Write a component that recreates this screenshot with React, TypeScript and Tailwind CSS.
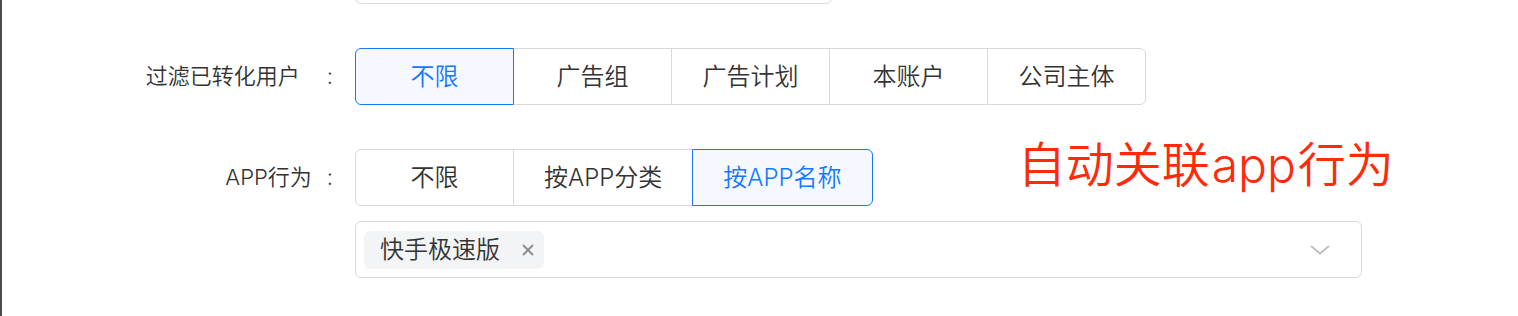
import { X } from 'lucide-react'

const font = { fontFamily: 'Inter, "Noto Sans CJK SC", sans-serif' }

type Opt = { label: string; active?: boolean }

const RadioGroup = ({ options }: { options: Opt[] }) => {
  return (
    <div className="flex">
      {options.map((o, i) => (
        <div
          key={o.label}
          className={[
            'relative flex h-[57px] min-w-[159px] items-center justify-center border px-[30px] text-[24px]',
            i > 0 ? '-ml-px' : '',
            i === 0 ? 'rounded-l-[6px]' : '',
            i === options.length - 1 ? 'rounded-r-[6px]' : '',
            o.active
              ? 'z-10 border-[#1677ff] bg-[#f5f9ff] text-[#1677ff]'
              : 'border-[#d9d9d9] bg-white text-[#333333]',
          ].join(' ')}
        >
          {o.label}
        </div>
      ))}
    </div>
  )
}

const Label = ({ text, gap }: { text: string; gap: string }) => (
  <div className="flex w-[353px] shrink-0 items-center justify-end pr-[22px] text-[22px] text-[#333333]">
    <span>{text}</span>
    <span className={gap}>:</span>
  </div>
)

const App = () => {
  return (
    <div
      className="h-[316px] w-full overflow-hidden border-l-2 border-[#4a4a4f] bg-white font-[350]"
      style={font}
    >
      {/* previous field, cut off at the top */}
      <div className="-mt-[52px] ml-[353px] h-[56px] w-[477px] rounded-[6px] border border-[#d9d9d9]" />

      {/* 过滤已转化用户 */}
      <div className="mt-[44px] flex items-center">
        <Label text="过滤已转化用户" gap="ml-[27px]" />
        <RadioGroup
          options={[
            { label: '不限', active: true },
            { label: '广告组' },
            { label: '广告计划' },
            { label: '本账户' },
            { label: '公司主体' },
          ]}
        />
      </div>

      {/* APP行为 */}
      <div className="mt-[44px] flex items-start">
        <div className="flex h-[57px] items-center">
          <Label text="APP行为" gap="ml-[15px]" />
          <RadioGroup
            options={[
              { label: '不限' },
              { label: '按APP分类' },
              { label: '按APP名称', active: true },
            ]}
          />
        </div>
        <div className="-mt-[8px] ml-[145px] text-[48px] leading-[48px] text-[#ff2a0a]">
          自动关联<span className="mx-[2px]">app</span>行为
        </div>
      </div>

      {/* APP 名称选择 */}
      <div className="mt-[15px] pl-[353px]">
        <div className="flex h-[57px] w-[1007px] items-center justify-between rounded-[6px] border border-[#d9d9d9] pl-[8px] pr-[31px]">
          <div className="flex h-[38px] items-center rounded-[6px] bg-[#f2f4f6] pl-[16px] pr-[7px] text-[24px] text-[#333333]">
            <span>快手极速版</span>
            <X className="ml-[19px] h-[18px] w-[18px] text-[#8c8c8c]" strokeWidth={2.4} />
          </div>
          <svg width="20" height="10" viewBox="0 0 20 10" fill="none">
            <polyline points="1,1 10,8.5 19,1" stroke="#bfbfbf" strokeWidth="2" />
          </svg>
        </div>
      </div>
    </div>
  )
}

export default App
